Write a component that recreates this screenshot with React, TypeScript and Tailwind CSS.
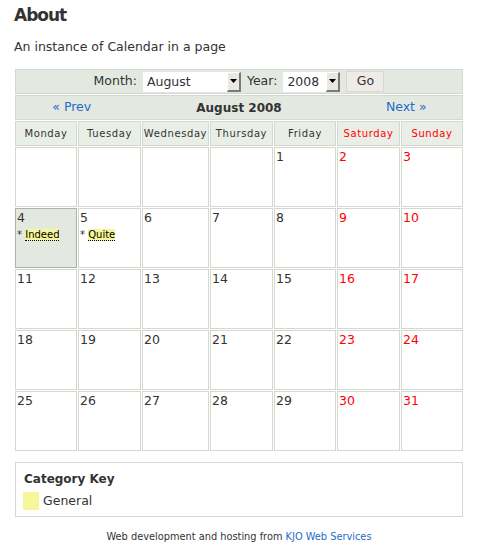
import React from "react";

const days = [
  { name: "Monday", weekend: false },
  { name: "Tuesday", weekend: false },
  { name: "Wednesday", weekend: false },
  { name: "Thursday", weekend: false },
  { name: "Friday", weekend: false },
  { name: "Saturday", weekend: true },
  { name: "Sunday", weekend: true },
];

// August 2008 starts on a Friday
const weeks: (number | null)[][] = [
  [null, null, null, null, 1, 2, 3],
  [4, 5, 6, 7, 8, 9, 10],
  [11, 12, 13, 14, 15, 16, 17],
  [18, 19, 20, 21, 22, 23, 24],
  [25, 26, 27, 28, 29, 30, 31],
];

const events: Record<number, string> = {
  4: "Indeed",
  5: "Quite",
};

const today = 4;

const FakeSelect = ({ value, width }: { value: string; width: string }) => (
  <div className={`flex h-[22px] ${width} items-stretch bg-white border border-[#e6e6e6]`}>
    <span className="flex-1 pl-[4px] leading-[20px]">{value}</span>
    <span className="flex w-[14px] items-center justify-center bg-[#ebe8e4] border-l border-t border-l-white border-t-white border-r-2 border-b-2 border-r-[#7a7a7a] border-b-[#7a7a7a]">
      <svg width="7" height="4" viewBox="0 0 7 4">
        <polygon points="0,0 7,0 3.5,4" fill="#000" />
      </svg>
    </span>
  </div>
);

const App = () => {
  return (
    <div className="w-[477px] h-[554px] bg-white text-[#333] font-['DejaVu_Sans',sans-serif] text-[12.5px] pl-[15px] pr-[14px]">
      <h1 className="pt-[3px] text-[17px] leading-[24px] font-bold tracking-[-1px] -ml-px">About</h1>
      <p className="mt-[12px] leading-[16px] -ml-px">An instance of Calendar in a page</p>

      <div className="mt-[14px] w-[448px] flex flex-col gap-px">
        <div className="h-[25px] flex items-center justify-center gap-[5px] bg-[#e3e9e1] border border-[#d2dad0]">
          <span>Month:</span>
          <FakeSelect value="August" width="w-[100px]" />
          <span>Year:</span>
          <FakeSelect value="2008" width="w-[59px]" />
          <span className="h-[21px] w-[38px] flex items-center justify-center bg-[#efece8] border border-[#d9d5d0]">Go</span>
        </div>

        <div className="h-[25px] grid grid-cols-[1fr_2fr_1fr] items-center text-center bg-[#e3e9e1] border border-[#d2dad0]">
          <a className="text-[#1f6bc9]">« Prev</a>
          <span className="font-bold text-[12px]">August 2008</span>
          <a className="text-[#1f6bc9]">Next »</a>
        </div>

        <div className="grid grid-cols-[62px_63px_67px_63px_62px_63px_62px] gap-px">
          {days.map((d) => (
            <div
              key={d.name}
              className={`h-[25px] flex items-center justify-center bg-[#e9efe7] border border-[#d2dad0] text-[10px] tracking-[0.6px] ${d.weekend ? "text-[#ff0000]" : ""}`}
            >
              {d.name}
            </div>
          ))}
          {weeks.map((week, wi) =>
            week.map((day, di) => (
              <div
                key={`${wi}-${di}`}
                className={`h-[60px] p-px border leading-[16px] ${
                  day === today ? "bg-[#e3e9e1] border-[#aeb1ad]" : "bg-white border-[#d2dad0]"
                } ${di >= 5 ? "text-[#ff0000]" : ""}`}
              >
                {day}
                {day !== null && events[day] && (
                  <div className="text-[10px] leading-[14px] mt-[2px]">
                    *{" "}
                    <span className="bg-[#f5f79a] text-black border-b border-dotted border-black">{events[day]}</span>
                  </div>
                )}
              </div>
            ))
          )}
        </div>
      </div>

      <div className="mt-[11px] w-[448px] h-[55px] border border-[#d2dad0] pl-[7px] pt-[8px]">
        <div className="font-bold text-[12px] leading-[16px] pl-px">Category Key</div>
        <div className="mt-[5px] flex items-center gap-[4px]">
          <span className="w-[16px] h-[18px] bg-[#f5f79a]" />
          <span>General</span>
        </div>
      </div>

      <p className="mt-[13px] text-center text-[9.8px] leading-[14px] w-[448px]">
        Web development and hosting from <a className="text-[#1f6bc9]">KJO Web Services</a>
      </p>
    </div>
  );
};

export default App;
